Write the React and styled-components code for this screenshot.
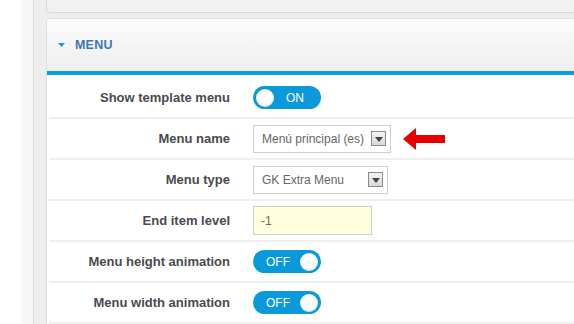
import styled, { createGlobalStyle } from 'styled-components'

const GlobalStyle = createGlobalStyle`
  html, body { margin: 0; padding: 0; }
  body { font-family: "Liberation Sans", Arial, sans-serif; background: #fff; }
`

const rows = [
  { label: 'Show template menu', type: 'toggle', on: true },
  { label: 'Menu name', type: 'select', value: 'Menú principal (es)', width: 138, arrow: true },
  { label: 'Menu type', type: 'select', value: 'GK Extra Menu', width: 135 },
  { label: 'End item level', type: 'input', value: '-1' },
  { label: 'Menu height animation', type: 'toggle', on: false },
  { label: 'Menu width animation', type: 'toggle', on: false },
]

function Toggle({ on }) {
  return (
    <Switch on={on}>
      {on ? (<><Knob /><SwitchText>ON</SwitchText></>) : (<><SwitchText>OFF</SwitchText><Knob /></>)}
    </Switch>
  )
}

function Select({ value, width }) {
  return (
    <SelectBox style={{ width }}>
      <span>{value}</span>
      <SelectBtn>
        <svg width="8" height="5" viewBox="0 0 8 5"><path d="M0 0h8L4 5z" fill="#444" /></svg>
      </SelectBtn>
    </SelectBox>
  )
}

function App() {
  return (
    <Page>
      <GlobalStyle />
      <Gutter />
      <Strip />
      <Main>
        <TopPanel />
        <Panel>
          <PanelHead>
            <svg width="7" height="4" viewBox="0 0 7 4"><path d="M0 0h7L3.5 4z" fill="#1b93d9" /></svg>
            <Title>MENU</Title>
          </PanelHead>
          <Body>
            {rows.map((r, i) => (
              <Row key={i}>
                <Label>{r.label}</Label>
                <Control>
                  {r.type === 'toggle' && <Toggle on={r.on} />}
                  {r.type === 'select' && <Select value={r.value} width={r.width} />}
                  {r.type === 'input' && <Input>{r.value}</Input>}
                  {r.arrow && (
                    <Arrow width="42" height="22" viewBox="0 0 42 22">
                      <path d="M0 11L13 0v7h29v8H13v7z" fill="#e60000" />
                    </Arrow>
                  )}
                </Control>
              </Row>
            ))}
          </Body>
        </Panel>
      </Main>
    </Page>
  )
}

export default App

const Page = styled.div`
  width: 574px;
  height: 324px;
  display: flex;
  overflow: hidden;
  background: #fff;
`

const Gutter = styled.div`
  width: 33px;
  flex-shrink: 0;
  background: linear-gradient(to right, #fff 0, #fff 21px, #f8f8f8 22px, #f7f7f7 100%);
  border-right: 1px solid #dcdcdc;
`

const Strip = styled.div`
  width: 12px;
  flex-shrink: 0;
  background: #eeeeee;
`

const Main = styled.div`
  flex: 1;
  background: #eeeeee;
  display: flex;
  flex-direction: column;
  gap: 5px;
`

const TopPanel = styled.div`
  height: 12px;
  background: #f1f1f1;
  border: 1px solid #d8d8d8;
  border-top: none;
  border-right: none;
  border-bottom-left-radius: 4px;
`

const Panel = styled.div`
  flex: 1;
  background: #fff;
  border: 1px solid #dedede;
  border-right: none;
  border-bottom: none;
  border-top-left-radius: 4px;
  display: flex;
  flex-direction: column;
`

const PanelHead = styled.div`
  height: 52px;
  display: flex;
  align-items: center;
  gap: 10px;
  padding-left: 11px;
  background: linear-gradient(to bottom, #fcfcfc, #eeeeee);
  border-bottom: 4px solid #0a9de0;
  border-top-left-radius: 4px;
`

const Title = styled.span`
  font-size: 12.5px;
  font-weight: bold;
  color: #3b78b4;
  letter-spacing: 0.2px;
`

const Body = styled.div`
  padding: 3px 0 0 2px;
`

const Row = styled.div`
  height: 39px;
  display: flex;
  align-items: center;
  border-bottom: 2px solid #efefef;
`

const Label = styled.div`
  width: 181px;
  text-align: right;
  font-size: 13px;
  font-weight: bold;
  color: #4a4a50;
`

const Control = styled.div`
  margin-left: 23px;
  display: flex;
  align-items: center;
`

const Switch = styled.div`
  width: 68px;
  height: 23px;
  border-radius: 12px;
  background: #0a9ad9;
  display: flex;
  align-items: center;
  justify-content: ${p => (p.on ? 'flex-start' : 'space-between')};
  gap: ${p => (p.on ? '12px' : '0')};
  padding: 0 3px 0 ${p => (p.on ? '3px' : '13px')};
  box-sizing: border-box;
`

const Knob = styled.div`
  width: 18px;
  height: 18px;
  border-radius: 50%;
  background: #fff;
  box-shadow: inset 0 -1px 2px rgba(0, 0, 0, 0.15);
`

const SwitchText = styled.span`
  color: #fff;
  font-size: 12px;
`

const SelectBox = styled.div`
  height: 28px;
  box-sizing: border-box;
  border: 1px solid #cfcfcf;
  background: #fff;
  display: flex;
  align-items: center;
  justify-content: space-between;
  padding: 0 4px 0 8px;
  font-size: 12px;
  color: #666;
`

const SelectBtn = styled.div`
  width: 15px;
  height: 15px;
  box-sizing: border-box;
  border: 1px solid #8a8a8a;
  background: linear-gradient(to bottom, #f4f4f4, #d8d8d8);
  display: flex;
  align-items: center;
  justify-content: center;
  padding-top: 2px;
`

const Input = styled.div`
  width: 119px;
  height: 29px;
  box-sizing: border-box;
  border: 1px solid #cfcfcf;
  background: #ffffdd;
  display: flex;
  align-items: center;
  padding-left: 7px;
  font-size: 12px;
  color: #666;
`

const Arrow = styled.svg`
  margin-left: 12px;
`
